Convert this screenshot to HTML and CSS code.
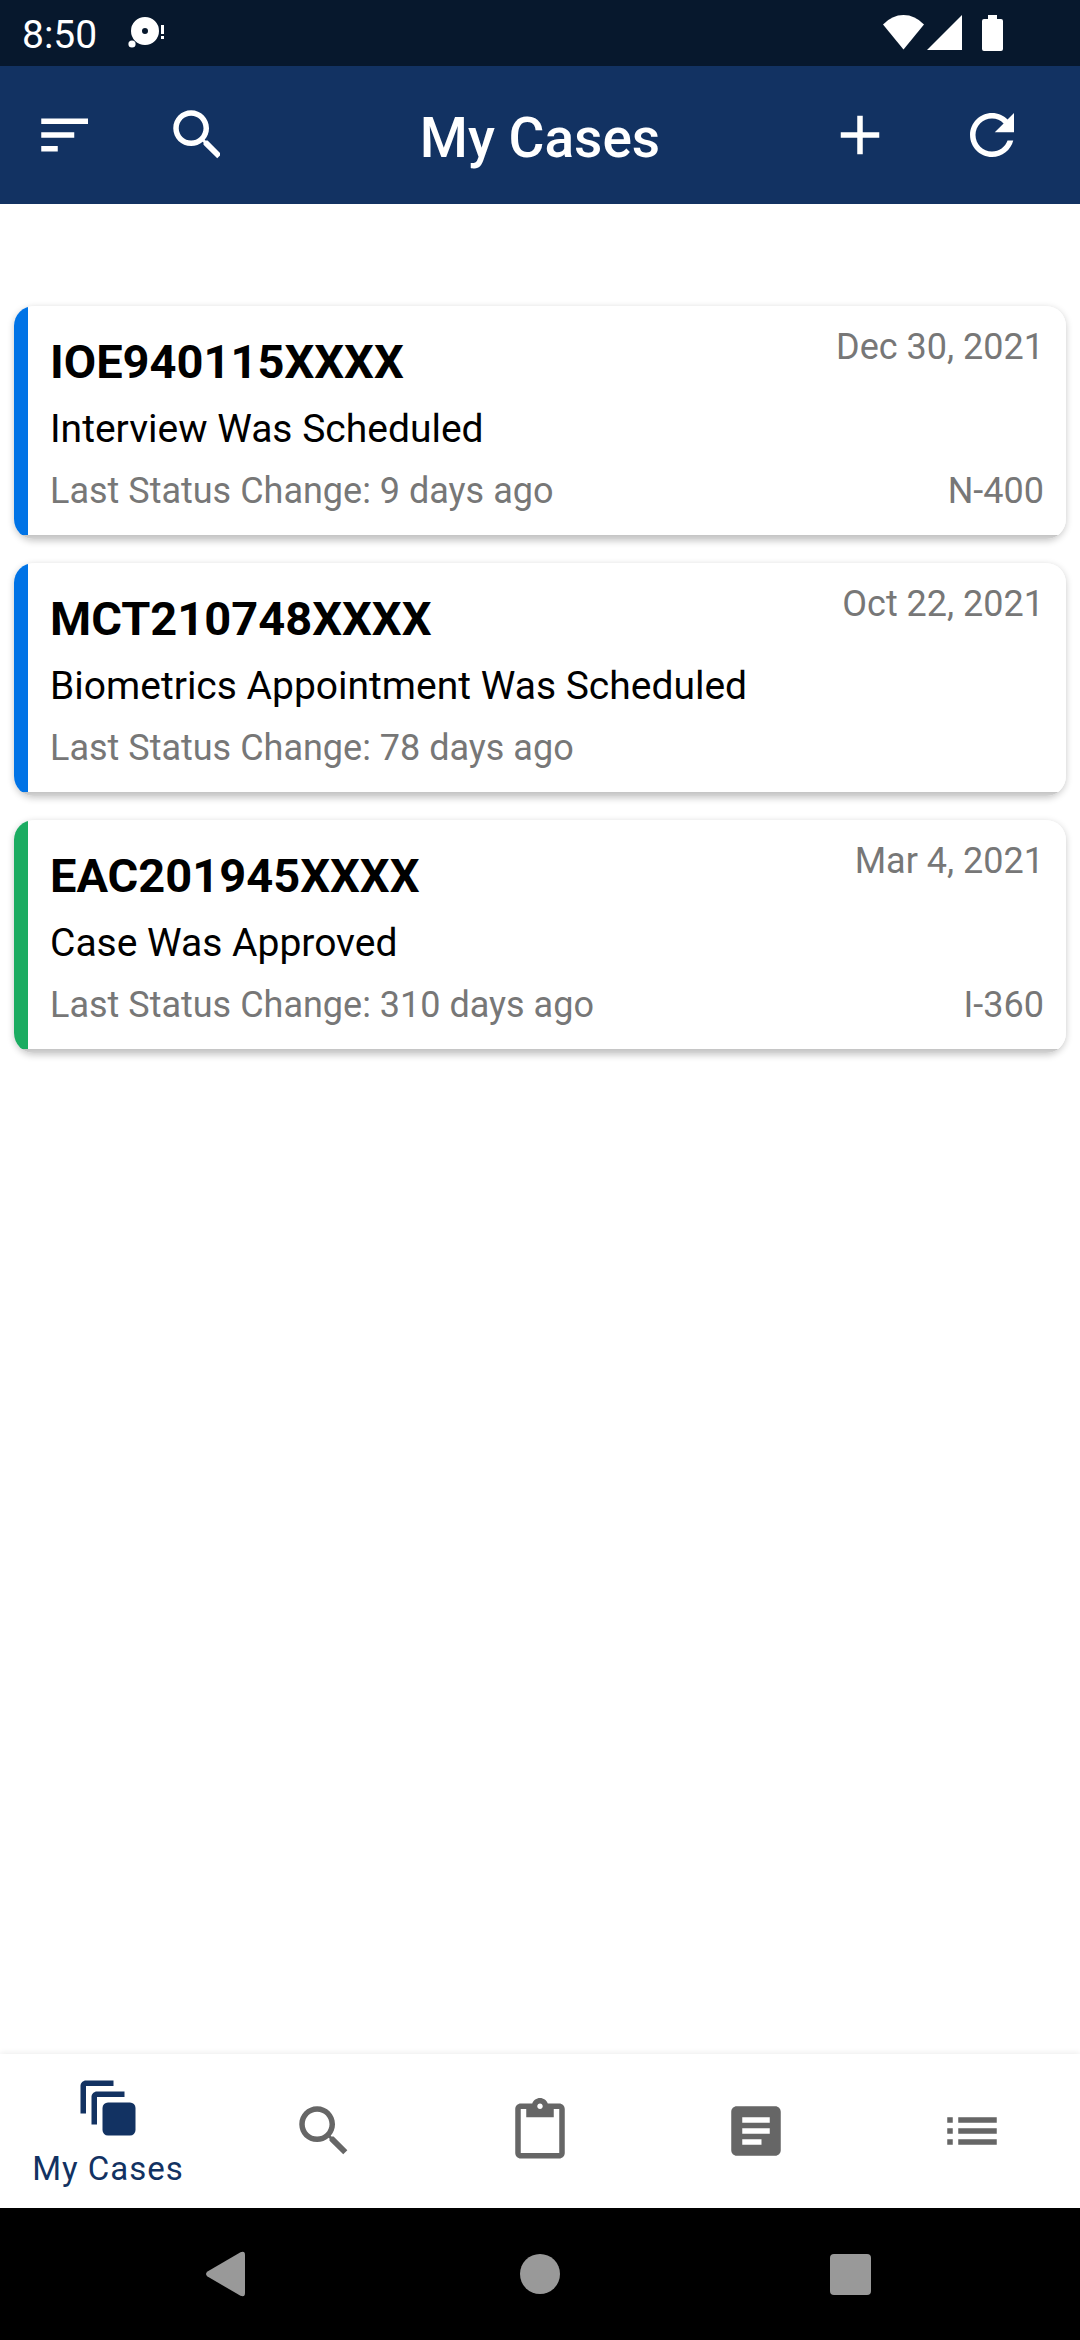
FILE: index.html
```html
<!DOCTYPE html>
<html lang="en">
<head>
<meta charset="utf-8">
<meta name="viewport" content="width=device-width, initial-scale=1">
<title>My Cases</title>
<link rel="stylesheet" href="styles.css">
</head>
<body>
<div class="status-bar">
  <span class="clock">8:50</span>
  <svg class="notice" width="38" height="32" viewBox="0 0 38 32" aria-hidden="true">
    <path fill-rule="evenodd" d="M17 0a14 14 0 1 0 0 28a14 14 0 0 0 0-28zM17 11a3 3 0 1 1 0 6a3 3 0 0 1 0-6z"/>
    <circle cx="4" cy="27" r="3.6"/>
    <path d="M33 8h3v9h-3zM33 19h3v3h-3z"/>
  </svg>
  <div class="signals">
    <svg width="41" height="36" viewBox="0 0 41 36" aria-hidden="true"><path d="M0 9.500Q9 0 20.500 0T41 9.500L20.500 34.500z"/></svg>
    <svg width="35" height="36" viewBox="0 0 35 36" aria-hidden="true"><path d="M35 0V35H0z"/></svg>
    <svg class="battery" width="21" height="36" viewBox="0 0 21 36" aria-hidden="true"><path d="M6 0h9v4h4a2 2 0 0 1 2 2v28a2 2 0 0 1-2 2H2a2 2 0 0 1-2-2V6a2 2 0 0 1 2-2h4z"/></svg>
  </div>
</div>

<header class="app-bar">
  <div class="actions">
    <button class="icon-button" type="button" aria-label="Sort"><svg width="55" height="66" viewBox="0 0 20 24"><path d="M3 18h6v-2H3v2zM3 6v2h18V6H3zm0 7h12v-2H3v2z"/></svg></button>
    <button class="icon-button" type="button" aria-label="Search"><svg width="55" height="66" viewBox="0 0 20 24"><path d="M15.500 14h-.79l-.28-.27C15.410 12.590 16 11.110 16 9.500 16 5.910 13.090 3 9.500 3S3 5.910 3 9.500 5.910 16 9.500 16c1.610 0 3.090-.59 4.230-1.570l.27.28v.79l5 4.990L20.490 19l-4.990-5zm-6 0C7.010 14 5 11.990 5 9.500S7.010 5 9.500 5 14 7.010 14 9.500 11.990 14 9.500 14z"/></svg></button>
  </div>
  <h1 class="title">My Cases</h1>
  <div class="actions actions-end">
    <button class="icon-button" type="button" aria-label="Add case"><svg width="55" height="66" viewBox="0 0 20 24"><path d="M19 13h-6v6h-2v-6H5v-2h6V5h2v6h6v2z"/></svg></button>
    <button class="icon-button" type="button" aria-label="Refresh"><svg width="55" height="66" viewBox="0 0 20 24"><path d="M17.650 6.350C16.200 4.900 14.210 4 12 4c-4.420 0-7.990 3.580-7.990 8s3.570 8 7.990 8c3.730 0 6.840-2.550 7.730-6h-2.080c-.82 2.330-3.040 4-5.650 4-3.310 0-6-2.690-6-6s2.690-6 6-6c1.660 0 3.140.69 4.220 1.780L13 11h7V4l-2.350 2.350z"/></svg></button>
  </div>
</header>

<main class="case-list">
  <article class="case">
    <div class="case-info">
      <h2 class="case-number">IOE940115XXXX</h2>
      <p class="case-status">Interview Was Scheduled</p>
      <p class="case-note">Last Status Change: 9 days ago</p>
    </div>
    <div class="case-side">
      <time class="case-note" datetime="2021-12-30">Dec 30, 2021</time>
      <span class="case-note">N-400</span>
    </div>
  </article>
  <article class="case">
    <div class="case-info">
      <h2 class="case-number">MCT210748XXXX</h2>
      <p class="case-status">Biometrics Appointment Was Scheduled</p>
      <p class="case-note">Last Status Change: 78 days ago</p>
    </div>
    <div class="case-side">
      <time class="case-note" datetime="2021-10-22">Oct 22, 2021</time>
    </div>
  </article>
  <article class="case case-approved">
    <div class="case-info">
      <h2 class="case-number">EAC201945XXXX</h2>
      <p class="case-status">Case Was Approved</p>
      <p class="case-note">Last Status Change: 310 days ago</p>
    </div>
    <div class="case-side">
      <time class="case-note" datetime="2021-03-04">Mar 4, 2021</time>
      <span class="case-note">I-360</span>
    </div>
  </article>
</main>

<nav class="tabs" aria-label="Sections">
  <a class="tab tab-active" href="#cases" aria-current="page">
    <svg width="66" height="66" viewBox="0 0 24 24" aria-hidden="true"><path d="M14 4H4v10H2V4c0-1.100.9-2 2-2h10zM18 8H8v10H6V8c0-1.100.9-2 2-2h10z"/><rect x="10" y="10" width="12" height="12" rx="2"/></svg>
    <span>My Cases</span>
  </a>
  <a class="tab" href="#search" aria-label="Search"><svg width="66" height="66" viewBox="0 0 24 24"><path d="M15.500 14h-.79l-.28-.27C15.410 12.590 16 11.110 16 9.500 16 5.910 13.090 3 9.500 3S3 5.910 3 9.500 5.910 16 9.500 16c1.610 0 3.090-.59 4.230-1.570l.27.28v.79l5 4.990L20.490 19l-4.990-5zm-6 0C7.010 14 5 11.990 5 9.500S7.010 5 9.500 5 14 7.010 14 9.500 11.990 14 9.500 14z"/></svg></a>
  <a class="tab" href="#forms" aria-label="Forms"><svg width="66" height="66" viewBox="0 0 24 24"><path d="M19 2h-4.180C14.400.84 13.300 0 12 0c-1.300 0-2.400.84-2.820 2H5c-1.100 0-2 .9-2 2v16c0 1.100.9 2 2 2h14c1.100 0 2-.9 2-2V4c0-1.100-.9-2-2-2zm-7 0c.55 0 1 .45 1 1s-.45 1-1 1-1-.45-1-1 .45-1 1-1zm7 18H5V4h2v3h10V4h2v16z"/></svg></a>
  <a class="tab" href="#news" aria-label="News"><svg width="66" height="66" viewBox="0 0 24 24"><path d="M19 3H5c-1.100 0-2 .9-2 2v14c0 1.100.9 2 2 2h14c1.100 0 2-.9 2-2V5c0-1.100-.9-2-2-2zm-5 14H7v-2h7v2zm3-4H7v-2h10v2zm0-4H7V7h10v2z"/></svg></a>
  <a class="tab" href="#more" aria-label="More"><svg width="66" height="66" viewBox="0 0 24 24"><path d="M3 13h2v-2H3v2zm0 4h2v-2H3v2zm0-8h2V7H3v2zm4 4h14v-2H7v2zm0 4h14v-2H7v2zM7 7v2h14V7H7z"/></svg></a>
</nav>

<div class="system-nav">
  <button class="system-button" type="button" aria-label="Back"><svg width="46" height="46" viewBox="0 0 46 46"><path d="M1.500 20.500L34.500 1.200Q39 -.5 39 4V42Q39 46.500 34.500 44.800L1.500 25.500Q-1.500 23 1.500 20.500z"/></svg></button>
  <button class="system-button" type="button" aria-label="Home"><svg width="46" height="46" viewBox="0 0 46 46"><circle cx="23" cy="23" r="20"/></svg></button>
  <button class="system-button" type="button" aria-label="Recent apps"><svg width="46" height="46" viewBox="0 0 46 46"><rect x="2" y="3" width="41" height="41" rx="4"/></svg></button>
</div>
</body>
</html>
```
FILE: styles.css
```css
* {
  box-sizing: border-box;
}

body {
  margin: 0;
  min-height: 100vh;
  display: flex;
  flex-direction: column;
  background: #fff;
  color: #000;
  font-family: Roboto, "Liberation Sans", sans-serif;
}

h1,
h2,
p {
  margin: 0;
}

button {
  padding: 0;
  border: 0;
  background: none;
  color: inherit;
  font: inherit;
}

svg {
  display: block;
  fill: currentColor;
}

/* Device status bar */
.status-bar {
  display: flex;
  align-items: center;
  height: 66px;
  padding: 0 77px 0 22px;
  background: #07182d;
  color: #fff;
}

.clock {
  padding-top: 4px;
  font-size: 39px;
  line-height: 46px;
}

.notice {
  margin-left: 31px;
}

.signals {
  display: flex;
  gap: 3px;
  margin-left: auto;
}

.battery {
  margin-left: 17px;
}

/* App bar */
.app-bar {
  display: grid;
  grid-template-columns: 1fr auto 1fr;
  align-items: center;
  height: 138px;
  padding: 0 33px;
  background: #123262;
  color: #fff;
}

.actions {
  display: flex;
  gap: 44px;
}

.actions-end {
  justify-content: flex-end;
}

.icon-button {
  width: 88px;
}

.title {
  padding-top: 6px;
  font-size: 55px;
  font-weight: 500;
  line-height: 64px;
}

/* Case cards */
.case-list {
  flex: 1;
  display: flex;
  flex-direction: column;
  gap: 24px;
  padding: 102px 14px 24px;
}

.case {
  --accent: #0073e6;
  display: flex;
  justify-content: space-between;
  padding: 16px 22px 23px 36px;
  border-radius: 20px;
  background:
    linear-gradient(#c4c4c4, #d4d4d4) bottom / 100% 4px no-repeat,
    linear-gradient(to right, var(--accent) 14px, #fff 14px);
  box-shadow: 0 2px 7px rgba(0, 0, 0, 0.22);
}

.case-approved {
  --accent: #1bac61;
}

.case-info {
  display: flex;
  flex-direction: column;
  gap: 12px;
  padding-top: 10px;
}

.case-side {
  display: flex;
  flex-direction: column;
  justify-content: space-between;
  align-items: flex-end;
}

.case-number {
  font-size: 47px;
  font-weight: 700;
  line-height: 60px;
}

.case-status {
  font-size: 39px;
  line-height: 50px;
}

.case-note {
  color: #777;
  font-size: 36px;
  line-height: 50px;
}

/* Bottom tabs */
.tabs {
  display: grid;
  grid-template-columns: repeat(5, 1fr);
  height: 154px;
  background: #fff;
  box-shadow: 0 -1px 6px rgba(0, 0, 0, 0.08);
}

.tab {
  display: flex;
  flex-direction: column;
  align-items: center;
  justify-content: center;
  gap: 8px;
  color: #666;
  font-size: 33px;
  line-height: 40px;
  letter-spacing: 1px;
  text-decoration: none;
}

.tab-active {
  padding-top: 2px;
  color: #123262;
}

/* Device navigation */
.system-nav {
  display: flex;
  height: 132px;
  padding: 0 74px;
  background: #000;
  color: #999;
}

.system-button {
  flex: 1;
  display: flex;
  align-items: center;
  justify-content: center;
}
```
